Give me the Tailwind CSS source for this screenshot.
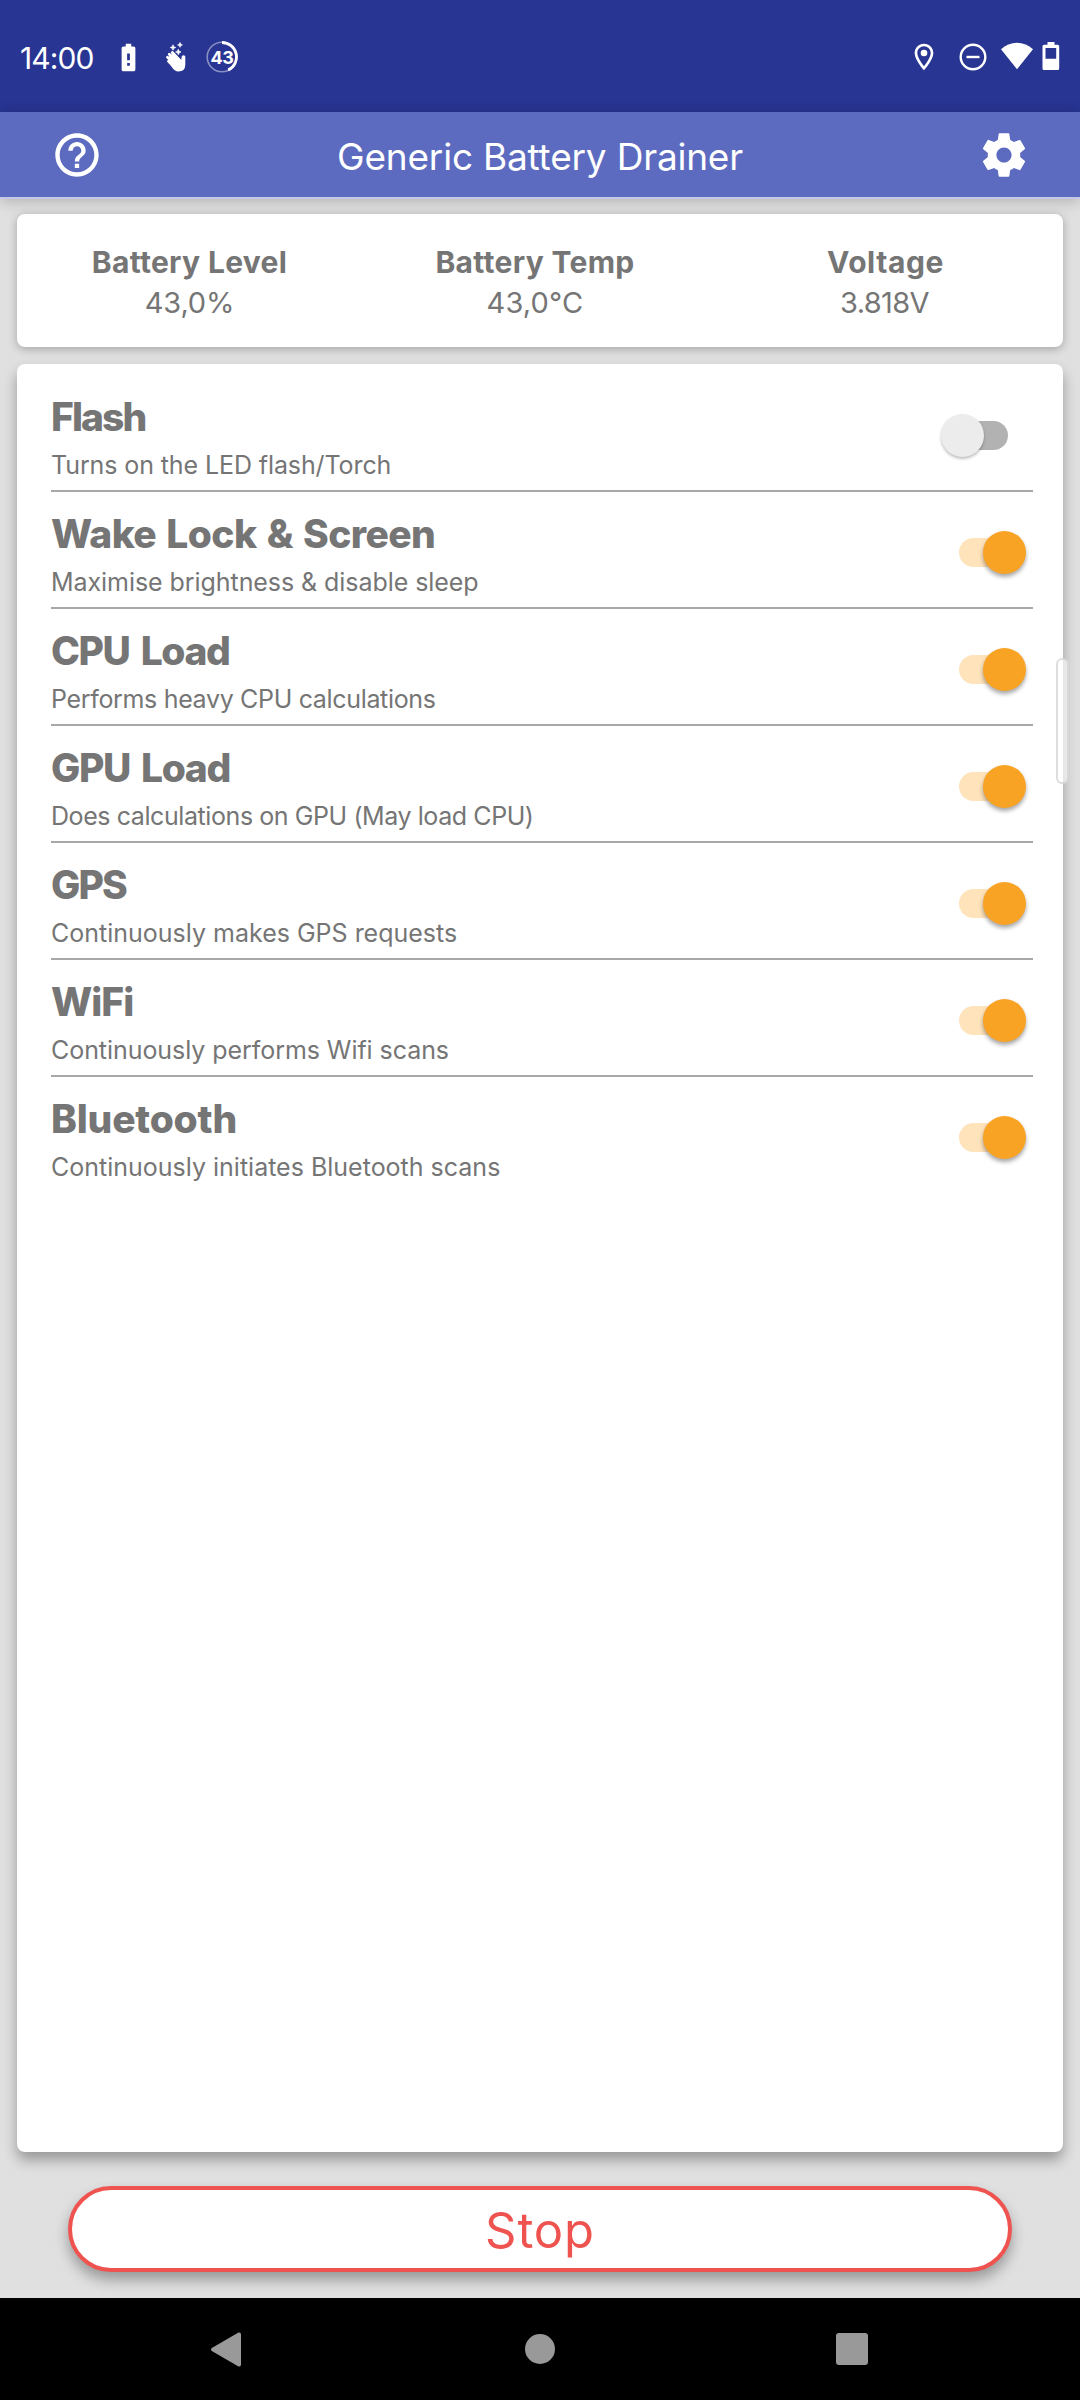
<!DOCTYPE html>
<html lang="en">

<head>
    <meta charset="UTF-8" />
    <meta name="viewport" content="width=device-width, initial-scale=1.0" />
    <title>Generic Battery Drainer</title>
    <script src="https://cdn.jsdelivr.net/npm/@tailwindcss/browser@4"></script>
</head>

<body class="bg-[#e0e0e0] font-['Inter',sans-serif]">
    <div class="relative flex flex-col w-[1080px] h-[2400px] overflow-hidden">
        <!-- Status bar -->
        <div class="flex justify-between h-28 pl-5 pr-5 pt-[42px] bg-[#283593] text-white">
            <div class="flex h-8">
                <span class="w-20 text-[30px] leading-8 tracking-[-0.9px] whitespace-nowrap">14:00</span>
                <svg class="w-[33px] h-[33px] ml-[11.5px] -mt-px" viewBox="0 0 24 24" fill="currentColor">
                    <path d="M15.67 4H14V2h-4v2H8.33C7.6 4 7 4.6 7 5.33v15.33C7 21.4 7.6 22 8.33 22h7.33c.74 0 1.34-.6 1.34-1.33V5.33C17 4.6 16.4 4 15.67 4zM13 18h-2v-2h2v2zm0-4h-2V9h2v5z" />
                </svg>
                <svg class="w-6 h-8 ml-[19.5px]" viewBox="164 42 24 32" fill="currentColor">
                    <path d="M168.5 62l3 4.5q3 5 7 5q6.7-.2 6.8-6.5v-8.5q-1.6-2.2-3.5-.2l-.6 3.7-7-7-5 3z" />
                    <path d="M172.3 52.5l7 7.5M169.3 54.2l7.5 7.5M167.5 57.3l7 6.5M168.5 61.3l5 5" stroke="currentColor" stroke-width="2.8" stroke-linecap="round" />
                    <path d="M173 44.8l.8 1.9 1.9.8-1.9.8-.8 1.9-.8-1.9-1.9-.8 1.9-.8zM180 42.5l.7 1.7 1.7.7-1.7.7-.7 1.7-.7-1.7-1.7-.7 1.7-.7zM178.3 49.3l.8 1.9 1.9.8-1.9.8-.8 1.9-.8-1.9-1.9-.8 1.9-.8z" stroke="currentColor" stroke-width=".7" />
                </svg>
                <div class="relative flex items-center justify-center w-8 h-8 ml-[18px] -mt-px">
                    <svg class="absolute inset-0 w-8 h-8" viewBox="0 0 32 32" fill="none" stroke="currentColor">
                        <circle cx="16" cy="16" r="14.8" stroke-width="1.6" class="opacity-45" />
                        <path d="M16 1.5A14.5 14.5 0 0 1 22.2 29.1" stroke-width="2.8" />
                    </svg>
                    <span class="text-[18px] leading-8 font-bold tracking-[-0.5px] pt-px">43</span>
                </div>
            </div>
            <div class="flex h-8">
                <svg class="w-8 h-8 -mt-px" viewBox="0 0 24 24" fill="currentColor">
                    <path d="M12 2C8.13 2 5 5.13 5 9c0 5.25 7 13 7 13s7-7.75 7-13c0-3.87-3.13-7-7-7zM7 9c0-2.76 2.24-5 5-5s5 2.24 5 5c0 2.88-2.88 7.19-5 9.88C9.92 16.21 7 11.85 7 9z" />
                    <circle cx="12" cy="9" r="2.5" />
                </svg>
                <svg class="w-8 h-8 ml-[17px] -mt-px" viewBox="0 0 32 32" fill="none" stroke="currentColor" stroke-width="2.4">
                    <circle cx="16" cy="16" r="12.3" />
                    <path d="M9.5 16h13" />
                </svg>
                <svg class="w-8 h-8 ml-[11.5px]" viewBox="0 0 32 32" fill="currentColor">
                    <path d="M16 27.2L0 7.3C4.5 3 10 .8 16 .8s11.5 2.2 16 6.5z" />
                </svg>
                <svg class="w-[18px] h-8 ml-[9.5px]" viewBox="0 0 18 32" fill="currentColor">
                    <path fill-rule="evenodd" d="M5.5 0h7v2.8h3.2a1.5 1.5 0 0 1 1.5 1.5v22.2a1.5 1.5 0 0 1-1.5 1.5H2a1.5 1.5 0 0 1-1.5-1.5V4.3A1.5 1.5 0 0 1 2 2.8h3.5zM3.5 6v10.8h10.7V6z" />
                </svg>
            </div>
        </div>

        <!-- App bar -->
        <header class="relative flex items-center justify-between h-[87px] px-[50.5px] bg-[#5c6bc0] border-b-2 border-[#c5c8e6] text-white shadow-[0_2px_14px_rgba(0,0,0,0.22)]">
            <svg class="w-[52px] h-[52px]" viewBox="0 0 24 24" fill="currentColor">
                <path d="M11 18h2v-2h-2v2zm1-16C6.48 2 2 6.48 2 12s4.48 10 10 10 10-4.48 10-10S17.52 2 12 2zm0 18c-4.41 0-8-3.59-8-8s3.59-8 8-8 8 3.59 8 8-3.59 8-8 8zm0-14c-2.21 0-4 1.79-4 4h2c0-1.1.9-2 2-2s2 .9 2 2c0 2-3 1.75-3 5h2c0-2.25 3-2.5 3-5 0-2.21-1.79-4-4-4z" />
            </svg>
            <h1 class="pt-1 text-[37px] leading-[48px] tracking-[-0.2px]">Generic Battery Drainer</h1>
            <svg class="w-[52px] h-[52px]" viewBox="0 0 24 24" fill="currentColor">
                <path d="M19.43 12.98c.04-.32.07-.64.07-.98s-.03-.66-.07-.98l2.11-1.65c.19-.15.24-.42.12-.64l-2-3.46c-.12-.22-.39-.3-.61-.22l-2.49 1c-.52-.4-1.08-.73-1.69-.98l-.38-2.65C14.46 2.18 14.25 2 14 2h-4c-.25 0-.46.18-.49.42l-.38 2.65c-.61.25-1.17.59-1.69.98l-2.49-1c-.23-.09-.49 0-.61.22l-2 3.46c-.13.22-.07.49.12.64l2.11 1.65c-.04.32-.07.65-.07.98s.03.66.07.98l-2.11 1.65c-.19.15-.24.42-.12.64l2 3.46c.12.22.39.3.61.22l2.49-1c.52.4 1.08.73 1.69.98l.38 2.65c.03.24.24.42.49.42h4c.25 0 .46-.18.49-.42l.38-2.65c.61-.25 1.17-.59 1.69-.98l2.49 1c.23.09.49 0 .61-.22l2-3.46c.12-.22.07-.49-.12-.64l-2.11-1.65zM12 15.5c-1.93 0-3.5-1.57-3.5-3.5s1.57-3.5 3.5-3.5 3.5 1.57 3.5 3.5-1.57 3.5-3.5 3.5z" />
            </svg>
        </header>

        <!-- Content -->
        <main class="flex-1 flex flex-col px-[17px] pt-[15px] pb-[26px] text-[#757575]">
            <section class="flex h-[133px] pt-7 bg-white rounded-lg text-center shadow-[0_2px_10px_rgba(0,0,0,0.28)]">
                <div class="w-[345px]">
                    <h2 class="text-[30px] leading-[40px] font-bold tracking-[0.31px]">Battery Level</h2>
                    <p class="text-[29px] leading-[42px] tracking-[-0.2px]">43,0%</p>
                </div>
                <div class="w-[346px]">
                    <h2 class="text-[30px] leading-[40px] font-bold tracking-[0.31px]">Battery Temp</h2>
                    <p class="text-[29px] leading-[42px] tracking-[0.14px]">43,0°C</p>
                </div>
                <div class="flex-1">
                    <h2 class="text-[30px] leading-[40px] font-bold tracking-[0.58px]">Voltage</h2>
                    <p class="pr-[2px] text-[29px] leading-[42px] tracking-[-0.63px]">3.818V</p>
                </div>
            </section>

            <section class="flex-1 mt-[17px] pl-[34px] pr-[30px] pt-[11px] bg-white rounded-lg shadow-[0_8px_14px_rgba(0,0,0,0.32)]">
                <div class="flex items-center justify-between h-[117px] border-b-2 border-[#a8a8a8]">
                    <div class="pt-[17px]">
                        <h3 class="text-[39px] leading-[48px] font-extrabold tracking-[-1.9px]">Flash</h3>
                        <p class="text-[25px] leading-[48px] tracking-[-0.1px]">Turns on the LED flash/Torch</p>
                    </div>
                    <div class="relative w-[67px] h-[43px] mt-[6px] mr-[25px]">
                        <div class="absolute right-0 top-[7px] w-[58px] h-[29px] rounded-full bg-[#b2b2b2]"></div>
                        <div class="absolute left-0 top-0 w-[43px] h-[43px] rounded-full bg-[#ececec] shadow-[0_2px_3px_rgba(0,0,0,0.25)]"></div>
                    </div>
                </div>
                <div class="flex items-center justify-between h-[117px] border-b-2 border-[#a8a8a8]">
                    <div class="pt-[17px]">
                        <h3 class="text-[39px] leading-[48px] font-extrabold tracking-[-0.6px] [word-spacing:2.3px]">Wake Lock &amp; Screen</h3>
                        <p class="text-[25px] leading-[48px] tracking-[-0.06px]">Maximise brightness &amp; disable sleep</p>
                    </div>
                    <div class="relative w-[67px] h-[43px] mt-[6px] mr-[7px]">
                        <div class="absolute left-0 top-[7px] w-[58px] h-[29px] rounded-full bg-[#fee3bb]"></div>
                        <div class="absolute right-0 top-0 w-[43px] h-[43px] rounded-full bg-[#f9a325] shadow-[0_3px_4px_rgba(0,0,0,0.35)]"></div>
                    </div>
                </div>
                <div class="flex items-center justify-between h-[117px] border-b-2 border-[#a8a8a8]">
                    <div class="pt-[17px]">
                        <h3 class="text-[39px] leading-[48px] font-extrabold tracking-[-1.4px] [word-spacing:4px]">CPU Load</h3>
                        <p class="text-[25px] leading-[48px] tracking-[-0.33px]">Performs heavy CPU calculations</p>
                    </div>
                    <div class="relative w-[67px] h-[43px] mt-[6px] mr-[7px]">
                        <div class="absolute left-0 top-[7px] w-[58px] h-[29px] rounded-full bg-[#fee3bb]"></div>
                        <div class="absolute right-0 top-0 w-[43px] h-[43px] rounded-full bg-[#f9a325] shadow-[0_3px_4px_rgba(0,0,0,0.35)]"></div>
                    </div>
                </div>
                <div class="flex items-center justify-between h-[117px] border-b-2 border-[#a8a8a8]">
                    <div class="pt-[17px]">
                        <h3 class="text-[39px] leading-[48px] font-extrabold tracking-[-1.4px] [word-spacing:4px]">GPU Load</h3>
                        <p class="text-[25px] leading-[48px] tracking-[-0.42px]">Does calculations on GPU (May load CPU)</p>
                    </div>
                    <div class="relative w-[67px] h-[43px] mt-[6px] mr-[7px]">
                        <div class="absolute left-0 top-[7px] w-[58px] h-[29px] rounded-full bg-[#fee3bb]"></div>
                        <div class="absolute right-0 top-0 w-[43px] h-[43px] rounded-full bg-[#f9a325] shadow-[0_3px_4px_rgba(0,0,0,0.35)]"></div>
                    </div>
                </div>
                <div class="flex items-center justify-between h-[117px] border-b-2 border-[#a8a8a8]">
                    <div class="pt-[17px]">
                        <h3 class="text-[39px] leading-[48px] font-extrabold tracking-[-1.9px]">GPS</h3>
                        <p class="text-[25px] leading-[48px]">Continuously makes GPS requests</p>
                    </div>
                    <div class="relative w-[67px] h-[43px] mt-[6px] mr-[7px]">
                        <div class="absolute left-0 top-[7px] w-[58px] h-[29px] rounded-full bg-[#fee3bb]"></div>
                        <div class="absolute right-0 top-0 w-[43px] h-[43px] rounded-full bg-[#f9a325] shadow-[0_3px_4px_rgba(0,0,0,0.35)]"></div>
                    </div>
                </div>
                <div class="flex items-center justify-between h-[117px] border-b-2 border-[#a8a8a8]">
                    <div class="pt-[17px]">
                        <h3 class="text-[39px] leading-[48px] font-extrabold tracking-[-1px]">WiFi</h3>
                        <p class="text-[25px] leading-[48px] tracking-[-0.06px]">Continuously performs Wifi scans</p>
                    </div>
                    <div class="relative w-[67px] h-[43px] mt-[6px] mr-[7px]">
                        <div class="absolute left-0 top-[7px] w-[58px] h-[29px] rounded-full bg-[#fee3bb]"></div>
                        <div class="absolute right-0 top-0 w-[43px] h-[43px] rounded-full bg-[#f9a325] shadow-[0_3px_4px_rgba(0,0,0,0.35)]"></div>
                    </div>
                </div>
                <div class="flex items-center justify-between h-[115px]">
                    <div class="pt-[17px]">
                        <h3 class="text-[39px] leading-[48px] font-extrabold tracking-[-0.2px]">Bluetooth</h3>
                        <p class="text-[25px] leading-[48px]">Continuously initiates Bluetooth scans</p>
                    </div>
                    <div class="relative w-[67px] h-[43px] mt-[6px] mr-[7px]">
                        <div class="absolute left-0 top-[7px] w-[58px] h-[29px] rounded-full bg-[#fee3bb]"></div>
                        <div class="absolute right-0 top-0 w-[43px] h-[43px] rounded-full bg-[#f9a325] shadow-[0_3px_4px_rgba(0,0,0,0.35)]"></div>
                    </div>
                </div>
            </section>

            <button class="h-[86px] mt-[34px] mx-[51px] pt-1 bg-white border-4 border-[#ef5350] rounded-full text-[#ef5350] text-[49px] leading-[74px] tracking-[0.85px] shadow-[0_8px_14px_rgba(0,0,0,0.32)]">Stop</button>
        </main>

        <!-- Navigation bar -->
        <nav class="relative h-[102px] flex items-center justify-between pl-[211px] pr-[212px] bg-black text-[#999999]">
            <svg class="w-[30px] h-[35px]" viewBox="0 0 30 35" fill="currentColor">
                <path d="M.8 16L27.5.5Q30 0 30 2.5v30q0 2.5-2.5 2L.8 19q-1.6-1.5 0-3z" />
            </svg>
            <div class="w-[30px] h-[30px] ml-[3px] rounded-full bg-[#999999]"></div>
            <div class="w-8 h-8 rounded-[3px] bg-[#999999]"></div>
        </nav>

        <!-- Edge handle -->
        <div class="absolute left-[1056px] top-[658px] w-[13px] h-[126px] rounded-[6px] bg-white/60 border-2 border-[#c8c8c8]/60"></div>
    </div>
</body>

</html>
